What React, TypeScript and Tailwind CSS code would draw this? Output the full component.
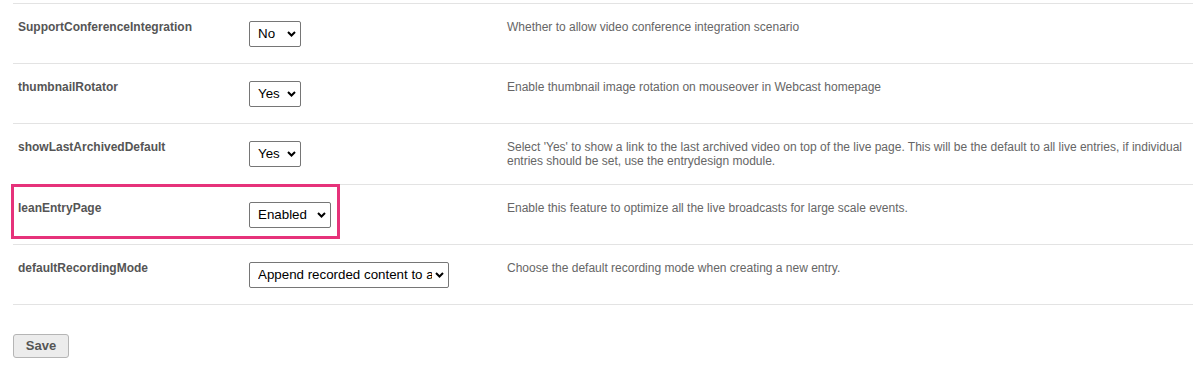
import React from "react";

const font = { fontFamily: '"Liberation Sans", Arial, sans-serif' };

function Chevron() {
  return (
    <svg width="9" height="6" viewBox="0 0 9 6" className="shrink-0">
      <path d="M1 1 L4.5 4.5 L8 1" fill="none" stroke="#000" strokeWidth="2" />
    </svg>
  );
}

function FakeSelect({ value, w }: { value: string; w: string }) {
  return (
    <div
      className={`mt-px flex h-[26px] items-center rounded-[2px] border border-[#767676] bg-white pl-[8px] pr-[4px] text-[13.33px] text-black ${w}`}
    >
      <span className="flex-1 overflow-hidden whitespace-nowrap">{value}</span>
      <span className="ml-[3px] flex items-center">
        <Chevron />
      </span>
    </div>
  );
}

type Row = { label: string; value: string; w: string; desc: string; hl?: boolean };

const rows: Row[] = [
  { label: "SupportConferenceIntegration", value: "No", w: "w-[52px]", desc: "Whether to allow video conference integration scenario" },
  { label: "thumbnailRotator", value: "Yes", w: "w-[52px]", desc: "Enable thumbnail image rotation on mouseover in Webcast homepage" },
  {
    label: "showLastArchivedDefault",
    value: "Yes",
    w: "w-[52px]",
    desc: "Select 'Yes' to show a link to the last archived video on top of the live page. This will be the default to all live entries, if individual entries should be set, use the entrydesign module.",
  },
  { label: "leanEntryPage", value: "Enabled", w: "w-[82px]", desc: "Enable this feature to optimize all the live broadcasts for large scale events.", hl: true },
  { label: "defaultRecordingMode", value: "Append recorded content to an existing entry", w: "w-[200px]", desc: "Choose the default recording mode when creating a new entry." },
];

export default function App() {
  return (
    <div className="h-[382px] w-[1193px] overflow-hidden bg-white" style={font}>
      <div className="pl-[13px] pt-[3px]">
        <div className="border-b border-[#e3e3e3]">
          {rows.map((r) => (
            <div key={r.label} className="relative flex border-t border-[#e3e3e3]">
              <div className="w-[236px] shrink-0 pl-[5px] pt-4 text-[12px] font-bold leading-[14px] text-[#555]">
                {r.label}
              </div>
              <div className="w-[258px] shrink-0 pb-4 pt-4">
                <FakeSelect value={r.value} w={r.w} />
              </div>
              <div className="flex-1 pb-4 pr-[8px] pt-4 text-[12px] leading-[14px] text-[#666]">{r.desc}</div>
              {r.hl && (
                <div className="pointer-events-none absolute left-[-2px] top-[-1px] h-[55px] w-[329px] border-[3px] border-[#e6327a]" />
              )}
            </div>
          ))}
        </div>
        <button className="mt-[29px] flex h-[24px] w-[56px] items-center justify-center rounded-[3px] border border-[#b5b5b5] bg-[#ececec] text-[13px] font-bold text-[#555]">
          Save
        </button>
      </div>
    </div>
  );
}
